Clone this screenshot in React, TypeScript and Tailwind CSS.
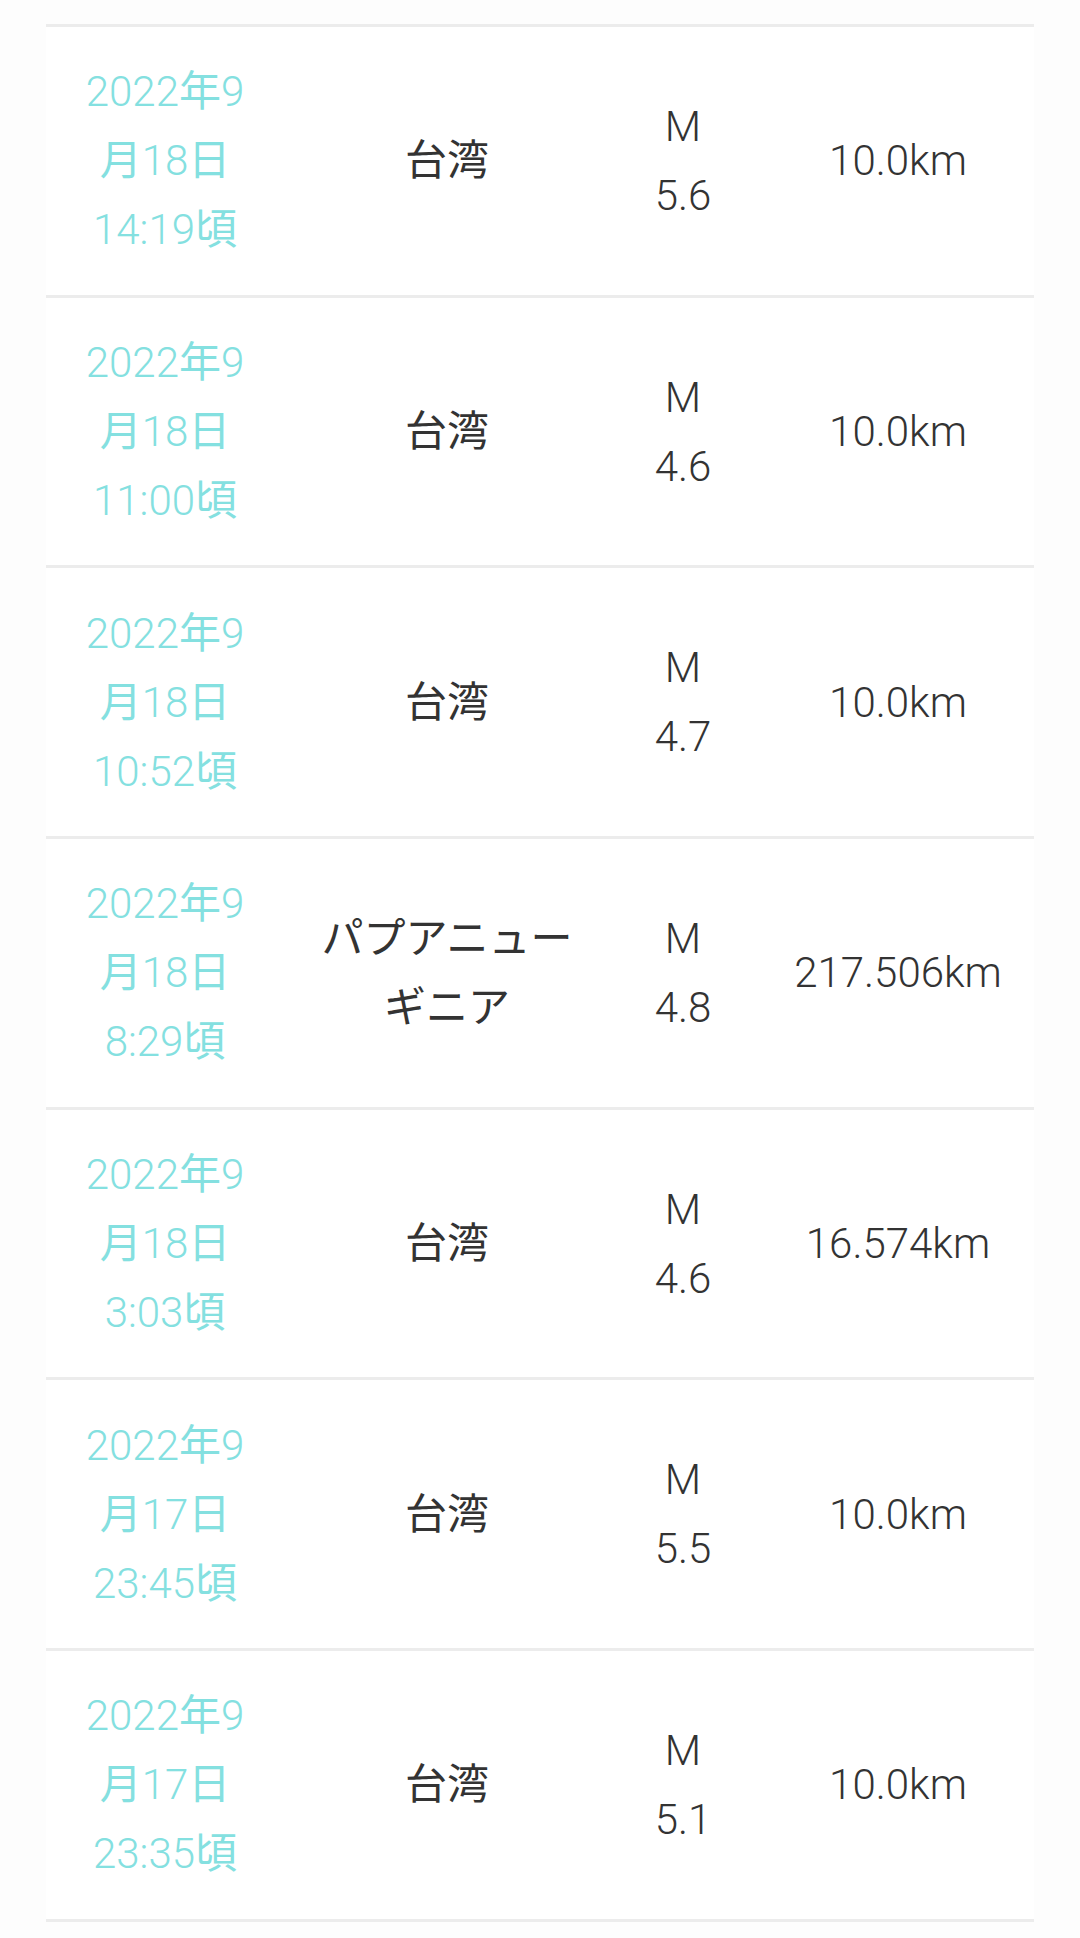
const rows = [
  { date: ['2022年9', '月18日', '14:19頃'], place: ['台湾'], mag: '5.6', depth: '10.0km' },
  { date: ['2022年9', '月18日', '11:00頃'], place: ['台湾'], mag: '4.6', depth: '10.0km' },
  { date: ['2022年9', '月18日', '10:52頃'], place: ['台湾'], mag: '4.7', depth: '10.0km' },
  { date: ['2022年9', '月18日', '8:29頃'], place: ['パプアニュー', 'ギニア'], mag: '4.8', depth: '217.506km' },
  { date: ['2022年9', '月18日', '3:03頃'], place: ['台湾'], mag: '4.6', depth: '16.574km' },
  { date: ['2022年9', '月17日', '23:45頃'], place: ['台湾'], mag: '5.5', depth: '10.0km' },
  { date: ['2022年9', '月17日', '23:35頃'], place: ['台湾'], mag: '5.1', depth: '10.0km' },
];

// digits are thin, kanji stay regular weight
const DateLine = ({ text }: { text: string }) => {
  const parts = text.match(/[0-9:]+|[^0-9:]+/g) || [];
  return (
    <span>
      {parts.map((p, i) => (
        <span key={i} className={/[0-9]/.test(p) ? 'font-light' : 'font-normal'}>
          {p}
        </span>
      ))}
    </span>
  );
};

const App = () => {
  return (
    <div
      className="min-h-[1938px] w-[1080px] bg-[#fdfdfd] text-[42px] leading-[69px]"
      style={{ fontFamily: 'Roboto, "Noto Sans CJK JP", sans-serif' }}
    >
      <div className="h-[24px]" />
      <div className="ml-[46px] w-[988px]">
        {rows.map((r, i) => (
          <div
            key={i}
            className="grid h-[270.7px] grid-cols-[238px_326px_146px_278px] items-center border-t-[3px] border-[#ececec] bg-white"
          >
            <div className="flex flex-col items-center text-[#84e0e0]">
              {r.date.map((d) => (
                <DateLine key={d} text={d} />
              ))}
            </div>
            <div className="flex flex-col items-center text-[#333333]">
              {r.place.map((p) => (
                <span key={p}>{p}</span>
              ))}
            </div>
            <div className="flex flex-col items-center font-light text-[#333333]">
              <span>M</span>
              <span>{r.mag}</span>
            </div>
            <div className="flex justify-center pl-[6px] font-light text-[#333333]">
              <span>{r.depth}</span>
            </div>
          </div>
        ))}
        <div className="border-t-[3px] border-[#ececec]" />
      </div>
    </div>
  );
};

export default App;
